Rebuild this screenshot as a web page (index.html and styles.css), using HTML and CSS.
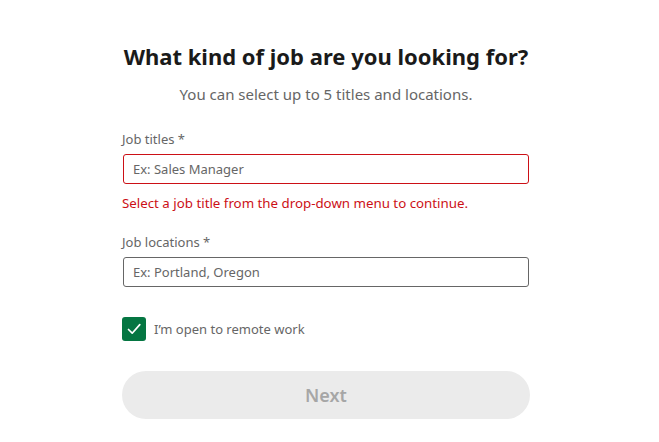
FILE: index.html
```html
<!DOCTYPE html>
<html lang="en">
<head>
<meta charset="utf-8">
<title>Job preferences</title>
<link rel="stylesheet" href="styles.css">
</head>
<body>
<main class="form">
  <h1 class="title">What kind of job are you looking for?</h1>
  <p class="subtitle">You can select up to 5 titles and locations.</p>

  <div class="field">
    <label class="label" for="titles">Job titles *</label>
    <input class="input input-error" id="titles" type="text" placeholder="Ex: Sales Manager">
    <p class="error">Select a job title from the drop-down menu to continue.</p>
  </div>

  <div class="field field-locations">
    <label class="label" for="locations">Job locations *</label>
    <input class="input" id="locations" type="text" placeholder="Ex: Portland, Oregon">
  </div>

  <label class="check">
    <span class="box">
      <svg width="18" height="18" viewBox="0 0 18 18"><path d="M3.5 9.5 L7.2 13.2 L14.8 4.6" fill="none" stroke="#fff" stroke-width="1.7" stroke-linecap="round" stroke-linejoin="round"/></svg>
    </span>
    <span class="check-text">I’m open to remote work</span>
  </label>

  <button class="next" type="button" disabled>Next</button>
</main>
</body>
</html>
```

FILE: styles.css
```css
* { box-sizing: border-box; }
html, body { margin: 0; padding: 0; background: #fff; }
body {
  font-family: "Noto Sans", "Open Sans", Arial, sans-serif;
  color: #000;
}
.form {
  width: 408px;
  margin-left: 122px;
  padding-top: 38px;
  display: flex;
  flex-direction: column;
}
.title {
  margin: 0;
  font-size: 22px;
  font-weight: 700;
  line-height: 36px;
  text-align: center;
  color: #1a1a1a;
  white-space: nowrap;
}
.subtitle {
  margin: 9px 0 0;
  font-size: 15px;
  line-height: 22px;
  text-align: center;
  color: #666;
}
.field { display: flex; flex-direction: column; margin-top: 25px; }
.field-locations { margin-top: 21px; }
.label {
  font-size: 13px;
  line-height: 18px;
  color: #666;
  margin-bottom: 6px;
}
.input {
  width: 406px;
  margin-left: 1px;
  height: 30px;
  border: 1px solid #666;
  border-radius: 3px;
  padding: 0 9px;
  font-family: inherit;
  font-size: 13px;
  color: #000;
  outline: none;
}
.input::placeholder { color: #666; }
.input-error { border-color: #cc1016; }
.error {
  margin: 10px 0 0;
  font-size: 13.3px;
  line-height: 18px;
  color: #cc1016;
}
.check {
  display: flex;
  align-items: center;
  gap: 8px;
  margin-top: 30px;
}
.box {
  width: 24px;
  height: 24px;
  border-radius: 3px;
  background: #057642;
  display: flex;
  align-items: center;
  justify-content: center;
}
.check-text { font-size: 13px; color: #666; }
.next {
  margin-top: 30px;
  height: 48px;
  border: none;
  border-radius: 24px;
  background: #ebebeb;
  color: #a6a6a6;
  font-family: inherit;
  font-size: 18px;
  font-weight: 600;
}
```
